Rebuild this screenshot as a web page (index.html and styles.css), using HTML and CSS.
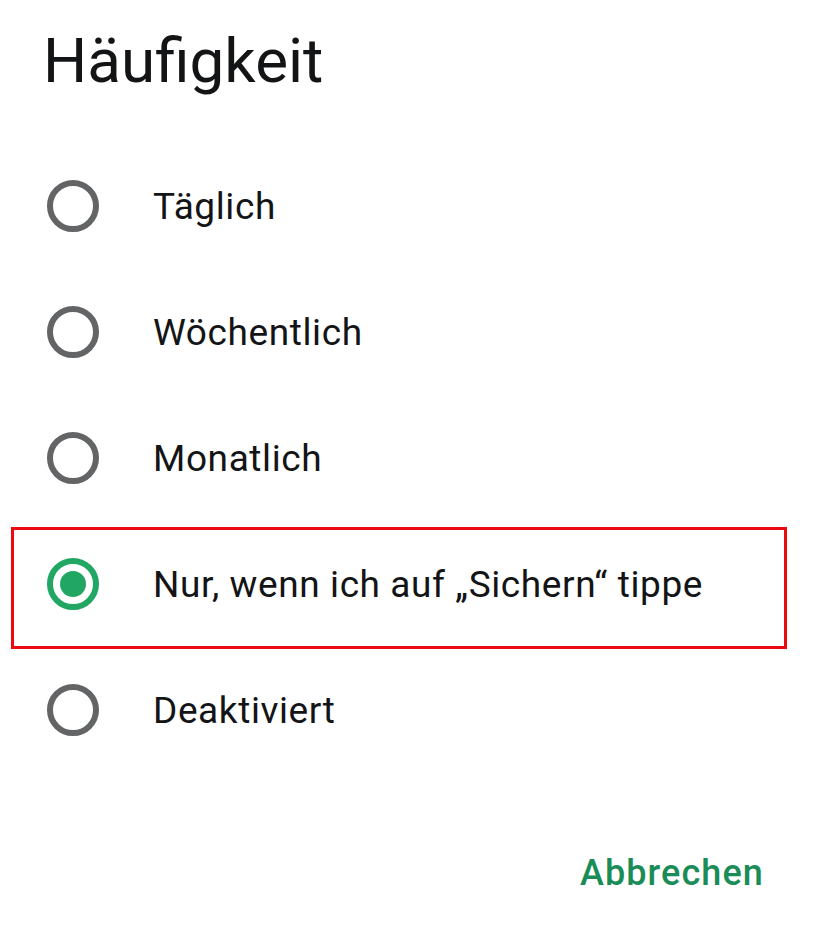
FILE: index.html
```html
<!DOCTYPE html>
<html lang="de">
<head>
<meta charset="utf-8">
<link rel="stylesheet" href="styles.css">
</head>
<body>
<div class="dialog">
  <h1 class="title">Häufigkeit</h1>
  <ul class="options">
    <li class="option"><span class="radio"></span><span class="label">Täglich</span></li>
    <li class="option"><span class="radio"></span><span class="label">Wöchentlich</span></li>
    <li class="option"><span class="radio"></span><span class="label">Monatlich</span></li>
    <li class="option selected"><span class="radio checked"></span><span class="label">Nur, wenn ich auf „Sichern“ tippe</span></li>
    <li class="option"><span class="radio"></span><span class="label">Deaktiviert</span></li>
  </ul>
  <div class="actions">
    <span class="btn">Abbrechen</span>
  </div>
</div>
</body>
</html>
```
FILE: styles.css
```css
html, body {
  margin: 0;
  padding: 0;
  background: #ffffff;
}
body {
  font-family: Roboto, "Noto Sans", sans-serif;
  color: #131416;
}
.dialog {
  width: 824px;
  height: 937px;
}
.title {
  margin: 21px 0 0 43px;
  font-size: 62px;
  font-weight: 400;
  line-height: 80px;
  letter-spacing: 0;
}
.options {
  list-style: none;
  margin: 42px 0 0 0;
  padding: 0;
}
.option {
  position: relative;
  display: flex;
  align-items: center;
  height: 126px;
  padding-left: 47px;
}
.option.selected::after {
  content: "";
  position: absolute;
  left: 11px;
  top: 6px;
  width: 770px;
  height: 116px;
  border: 3.5px solid #ea0a0f;
}
.radio {
  box-sizing: border-box;
  width: 52px;
  height: 52px;
  border-radius: 50%;
  border: 6.5px solid #636466;
  flex: none;
  display: flex;
  align-items: center;
  justify-content: center;
}
.radio.checked {
  border-color: #22a663;
}
.radio.checked::before {
  content: "";
  width: 26px;
  height: 26px;
  border-radius: 50%;
  background: #22a663;
}
.label {
  margin-left: 54px;
  font-size: 37px;
  letter-spacing: 0.6px;
}
.actions {
  display: flex;
  justify-content: flex-end;
  margin-top: 76px;
  padding-right: 60px;
}
.btn {
  font-size: 36px;
  line-height: 48px;
  font-weight: 500;
  color: #1a8c57;
  letter-spacing: 1.1px;
}
```
